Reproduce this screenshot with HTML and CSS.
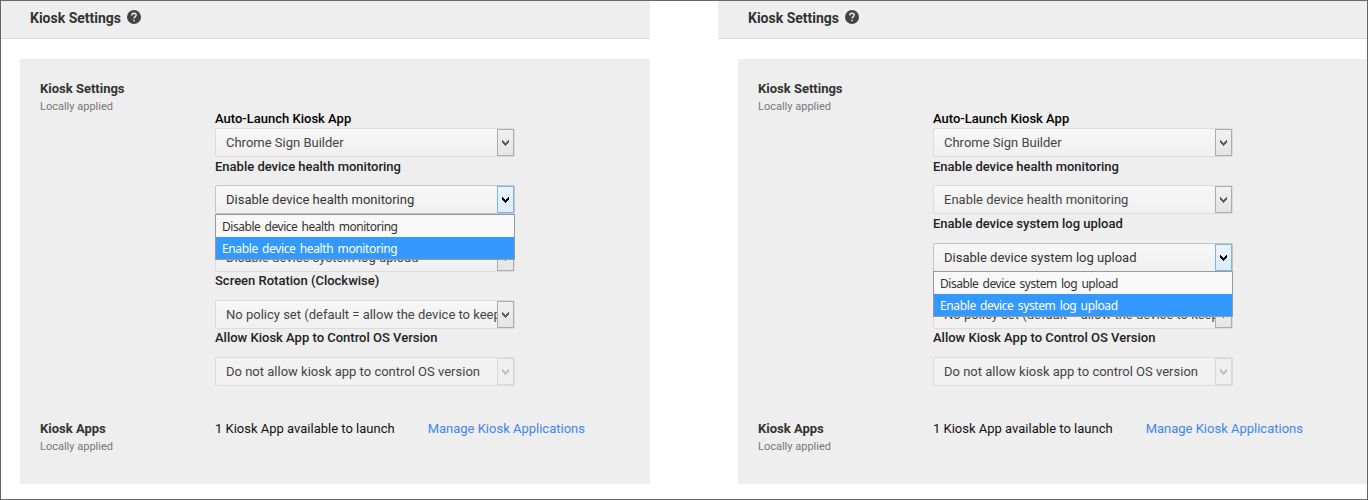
FILE: index.html
```html
<!DOCTYPE html>
<html lang="en">
<head>
<meta charset="utf-8">
<title>Kiosk Settings</title>
<link rel="stylesheet" href="styles.css">
</head>
<body>
<svg width="0" height="0" class="defs">
  <symbol id="chev" viewBox="0 0 7 7"><path d="M0 1h1v1h1v1h1v1h1v-1h1v-1h1v-1h1v3h-1v1h-1v1h-1v1h-1v-1h-1v-1h-1v-1h-1z" fill="currentColor"/></symbol>
  <symbol id="help" viewBox="0 0 14 14"><circle cx="7" cy="7" r="7" fill="#444"/><path d="M4.8 5.4C4.8 4 5.7 3.2 7 3.2s2.2.8 2.2 1.9c0 1.4-2.1 1.7-2.1 3.3" fill="none" stroke="#eee" stroke-width="1.4"/><rect x="6.3" y="9.8" width="1.5" height="1.5" fill="#eee"/></symbol>
</svg>
<main class="frame">
  <section class="panel">
    <header class="bar"><h1>Kiosk Settings</h1><svg class="help"><use href="#help"/></svg></header>
    <div class="card">
      <div class="side"><h2>Kiosk Settings</h2><p>Locally applied</p></div>
      <div class="fields">
        <div class="label first">Auto-Launch Kiosk App</div>
        <div class="select"><span class="value">Chrome Sign Builder</span><span class="btn"><svg><use href="#chev"/></svg></span></div>
        <div class="label">Enable device health monitoring</div>
        <div class="select open"><span class="value">Disable device health monitoring</span><span class="btn"><svg><use href="#chev"/></svg></span>
          <ul class="menu"><li>Disable device health monitoring</li><li class="on">Enable device health monitoring</li></ul>
        </div>
        <div class="label tall">Enable device system log upload</div>
        <div class="select"><span class="value">Disable device system log upload</span><span class="btn"><svg><use href="#chev"/></svg></span></div>
        <div class="label snug">Screen Rotation (Clockwise)</div>
        <div class="select"><span class="value">No policy set (default = allow the device to keep its current rotation)</span><span class="btn"><svg><use href="#chev"/></svg></span></div>
        <div class="label snug">Allow Kiosk App to Control OS Version</div>
        <div class="select disabled"><span class="value">Do not allow kiosk app to control OS version</span><span class="btn"><svg><use href="#chev"/></svg></span></div>
      </div>
      <div class="side apps"><h2>Kiosk Apps</h2><p>Locally applied</p></div>
      <div class="launch"><span>1 Kiosk App available to launch</span><a>Manage Kiosk Applications</a></div>
    </div>
  </section>
  <section class="panel second">
    <header class="bar"><h1>Kiosk Settings</h1><svg class="help"><use href="#help"/></svg></header>
    <div class="card">
      <div class="side"><h2>Kiosk Settings</h2><p>Locally applied</p></div>
      <div class="fields">
        <div class="label first">Auto-Launch Kiosk App</div>
        <div class="select"><span class="value">Chrome Sign Builder</span><span class="btn"><svg><use href="#chev"/></svg></span></div>
        <div class="label">Enable device health monitoring</div>
        <div class="select"><span class="value">Enable device health monitoring</span><span class="btn"><svg><use href="#chev"/></svg></span></div>
        <div class="label tall">Enable device system log upload</div>
        <div class="select open"><span class="value">Disable device system log upload</span><span class="btn"><svg><use href="#chev"/></svg></span>
          <ul class="menu high"><li>Disable device system log upload</li><li class="on">Enable device system log upload</li></ul>
        </div>
        <div class="label snug">Screen Rotation (Clockwise)</div>
        <div class="select"><span class="value">No policy set (default = allow the device to keep its current rotation)</span><span class="btn"><svg><use href="#chev"/></svg></span></div>
        <div class="label snug">Allow Kiosk App to Control OS Version</div>
        <div class="select disabled"><span class="value">Do not allow kiosk app to control OS version</span><span class="btn"><svg><use href="#chev"/></svg></span></div>
      </div>
      <div class="side apps"><h2>Kiosk Apps</h2><p>Locally applied</p></div>
      <div class="launch"><span>1 Kiosk App available to launch</span><a>Manage Kiosk Applications</a></div>
    </div>
  </section>
</main>
</body>
</html>
```
FILE: styles.css
```css
* { box-sizing: border-box; margin: 0; padding: 0; }
body { font-family: Roboto, "Liberation Sans", sans-serif; font-size: 13px; background: #fff; }
.defs { display: none; }
.frame { width: 1368px; height: 500px; border: 1px solid #666; display: flex; overflow: hidden; }
.panel { width: 649px; flex: none; }
.second { width: 650px; margin-left: 68px; }
.bar { height: 38px; background: #eee; border-bottom: 1px solid #d9d9d9; display: flex; padding: 8px 0 0 29px; }
.second .bar { padding-left: 30px; }
h1 { font-size: 14px; line-height: 18px; font-weight: 700; color: #333; }
.help { width: 14px; height: 14px; margin: 1px 0 0 6px; }
.card { margin: 20px 0 0 19px; height: 425px; background: #eee; display: grid; grid-template-columns: 175px 1fr; grid-template-rows: 340px 1fr; padding: 20px 0 0 20px; }
.second .card { margin-left: 20px; }
h2 { font-size: 13px; line-height: 20px; font-weight: 700; color: #333; }
.side p { font-size: 11px; line-height: 15px; color: #777; }
.fields { padding-top: 31px; width: 300px; }
.label { height: 28px; line-height: 20px; font-weight: 500; color: #222; white-space: nowrap; }
.label.first { height: 18px; line-height: 17px; color: #000; }
.label.tall { height: 29px; }
.label.snug { line-height: 18px; }
.select { position: relative; height: 29px; border: 1px solid #dcdcdc; border-radius: 2px; background: linear-gradient(#f7f7f7, #f0f0f0); display: flex; color: #444; }
.value { flex: 1; min-width: 0; overflow: hidden; white-space: nowrap; padding-left: 10px; line-height: 27px; }
.btn { width: 17px; height: 27px; flex: none; border: 1px solid #acacac; background: linear-gradient(#f0f0f0, #e5e5e5); display: flex; align-items: center; justify-content: center; color: #606060; }
.btn svg { width: 7px; height: 7px; }
.open { border-color: #c4c4c4; color: #333; }
.open .btn { border-color: #7eb4ea; background: linear-gradient(#ecf4fc, #dcecfc); color: #000; }
.disabled { background: #f2f2f2; }
.disabled .btn { border-color: #d9d9d9; background: #efefef; color: #bfbfbf; }
.menu { position: absolute; z-index: 2; left: -1px; top: 28px; width: 300px; height: 46px; border: 1px solid #999; background: #f8f8f8; list-style: none; font-family: "Noto Sans", sans-serif; font-size: 12px; letter-spacing: -0.46px; word-spacing: 1.5px; color: #333; }
.menu.high { top: 27px; }
.menu li { height: 22px; line-height: 24px; padding-left: 6px; white-space: nowrap; }
.menu .on { background: #39f; color: #fff; letter-spacing: -0.37px; }
.launch { display: flex; gap: 33px; line-height: 20px; color: #111; }
.launch a { color: #4285f4; }
```
